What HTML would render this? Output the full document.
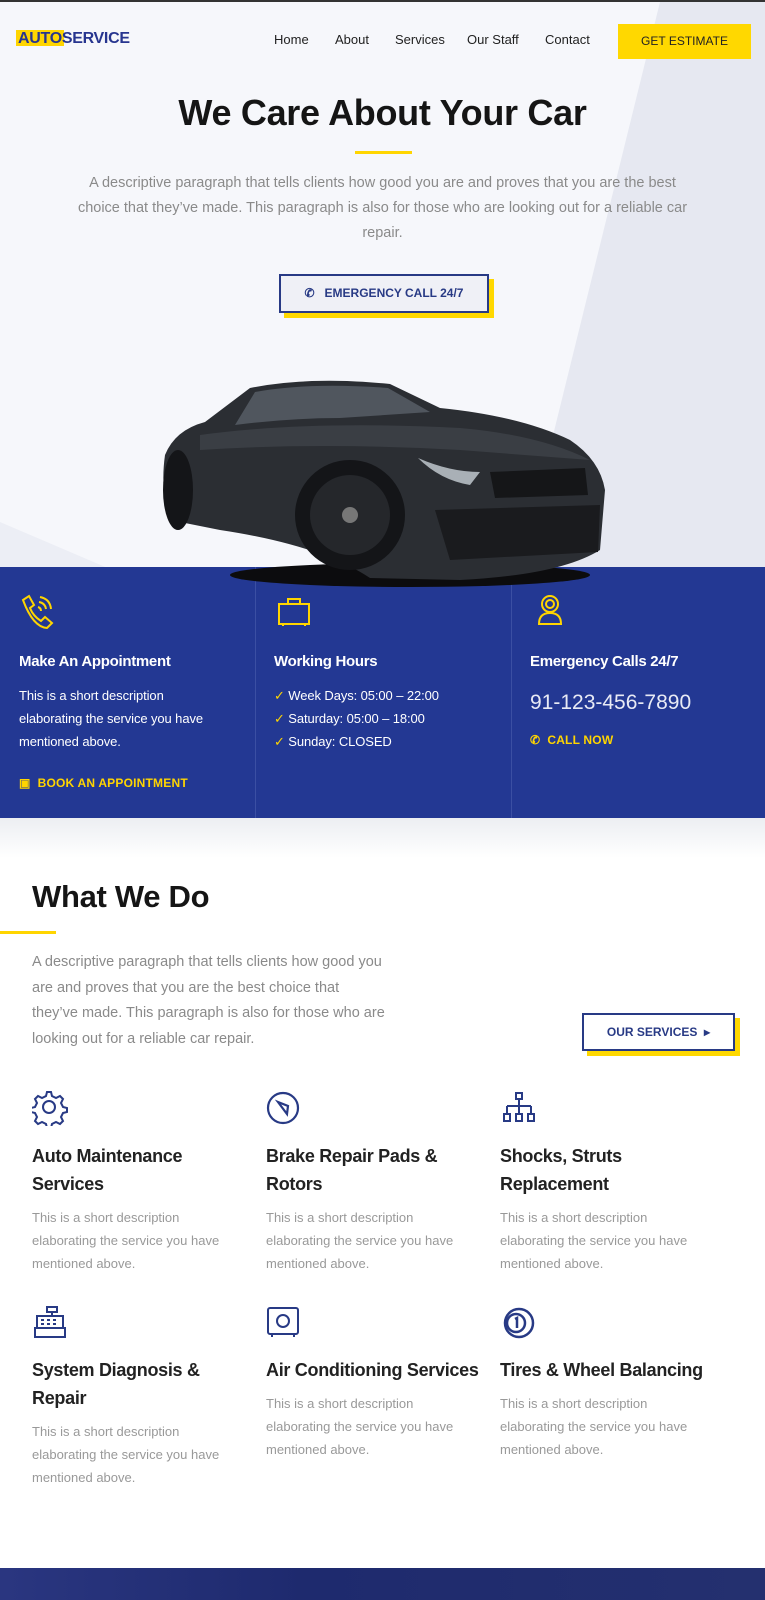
<!DOCTYPE html>
<html><head><meta charset="utf-8"><style>
*{margin:0;padding:0;box-sizing:border-box}
body{width:765px;height:1600px;overflow:hidden;background:#fff;font-family:"Liberation Sans",sans-serif;position:relative}
.a{position:absolute}
.hero{left:0;top:0;width:765px;height:567px;background:#e6e8f1;border-top:2px solid #333;overflow:hidden}
.nav{font-size:13px;color:#222;top:32px}
.p{color:#8a8a8a;font-size:13.5px;line-height:25px}
.blue{left:0;top:567px;width:765px;height:251px;background:#233893}
.col{top:0;height:251px;color:#fff}
.col h3{position:absolute;top:86px;font-size:15px;font-weight:bold;letter-spacing:-.3px}
.col .t{position:absolute;top:117px;font-size:13px;line-height:23px;letter-spacing:-.1px}
.ylink{color:#ffd500;font-size:12px;font-weight:bold;letter-spacing:.2px}
.sv h4{font-size:18px;font-weight:bold;color:#222;line-height:28px;letter-spacing:-.3px}
.sv .p{font-size:13px;line-height:23px;color:#999;margin-top:8px;letter-spacing:0}
</style></head><body>
<div class="a hero">
 <svg class="a" style="left:0;top:0" width="765" height="567"><polygon points="0,0 660,0 520,567 0,567" fill="#f6f7fb"/><polygon points="0,567 110,567 0,520" fill="#eceef5"/></svg>
</div>
<div class="a" style="left:16px;top:30px;width:48px;height:16px;background:#ffd500"></div>
<div class="a" style="left:18px;top:30px;font-size:16px;font-weight:900;color:#27358f;letter-spacing:-.3px">AUTOSERVICE</div>
<div class="a nav" style="left:274px">Home</div>
<div class="a nav" style="left:335px">About</div>
<div class="a nav" style="left:395px">Services</div>
<div class="a nav" style="left:467px">Our Staff</div>
<div class="a nav" style="left:545px">Contact</div>
<div class="a" style="left:618px;top:24px;width:133px;height:35px;background:#ffd800;font-size:12px;color:#222;text-align:center;line-height:35px">GET ESTIMATE</div>
<div class="a" style="left:0;top:92px;width:765px;text-align:center;font-size:36px;font-weight:bold;color:#151515;letter-spacing:-.3px">We Care About Your Car</div>
<div class="a" style="left:355px;top:151px;width:57px;height:3px;background:#ffd500"></div>
<div class="a p" style="left:20px;top:171px;width:725px;text-align:center;font-size:14.5px;letter-spacing:0">A descriptive paragraph that tells clients how good you are and proves that you are the best<br>choice that they’ve made. This paragraph is also for those who are looking out for a reliable car<br>repair.</div>
<div class="a" style="left:284px;top:279px;width:210px;height:39px;background:#ffd800"></div>
<div class="a" style="left:279px;top:274px;width:210px;height:39px;border:2px solid #283a85;background:#eff0f6;color:#283a85;font-size:12px;font-weight:bold;line-height:35px;text-align:center">&#9990;&nbsp;&nbsp; EMERGENCY CALL 24/7</div>
<div class="a blue">
 <div class="a" style="left:255px;top:0;width:1px;height:251px;background:#3b4fa3"></div>
 <div class="a" style="left:511px;top:0;width:1px;height:251px;background:#3b4fa3"></div>
 <div class="a col" style="left:19px;width:230px">
  <svg class="a" style="left:0;top:27px" width="38" height="36" viewBox="0 0 38 36" fill="none" stroke="#ffd500" stroke-width="2"><path d="M4,6 L10,2 L15,11 L11,14 Q14,22 22,27 L26,23 L33,29 L28,34 Q14,33 4,6Z"/><path d="M20,8 Q26,9 27,15 M21,3 Q31,5 32,15 M19,13 Q22,14 22,17"/></svg>
  <h3>Make An Appointment</h3>
  <div class="t">This is a short description<br>elaborating the service you have<br>mentioned above.</div>
  <div class="a ylink" style="top:209px">&#9635;&nbsp; BOOK AN APPOINTMENT</div>
 </div>
 <div class="a col" style="left:274px;width:230px">
  <svg class="a" style="left:4px;top:30px" width="32" height="30" fill="none" stroke="#ffd500" stroke-width="2"><rect x="1" y="7" width="30" height="20"/><rect x="10" y="2" width="12" height="5"/><path d="M5,27v2M27,27v2"/></svg>
  <h3>Working Hours</h3>
  <div class="t"><span style="color:#ffd500">✓</span> Week Days: 05:00 – 22:00<br><span style="color:#ffd500">✓</span> Saturday: 05:00 – 18:00<br><span style="color:#ffd500">✓</span> Sunday: CLOSED</div>
 </div>
 <div class="a col" style="left:530px;width:230px">
  <svg class="a" style="left:6px;top:27px" width="28" height="32" fill="none" stroke="#ffd500" stroke-width="2"><circle cx="14" cy="10" r="8"/><circle cx="14" cy="10" r="4"/><path d="M3,30 Q3,19 14,19 Q25,19 25,30 Z"/></svg>
  <h3>Emergency Calls 24/7</h3>
  <div class="a" style="top:124px;font-size:21px;color:#e8eaf5">91-123-456-7890</div>
  <div class="a ylink" style="top:166px">&#9990;&nbsp; CALL NOW</div>
 </div>
</div>
<!-- car -->
<svg class="a" style="left:160px;top:380px" width="450" height="210" viewBox="0 0 450 210">
<ellipse cx="250" cy="195" rx="180" ry="12" fill="#0c0c0e"/>
<path d="M5,75 Q15,50 45,42 L90,8 Q150,-4 230,4 L280,28 Q360,36 410,60 Q440,80 445,110 L440,170 Q400,195 300,200 L210,198 Q160,165 60,150 L10,140 Q0,110 5,75 Z" fill="#2b2e33"/>
<path d="M95,12 Q150,2 228,8 L270,32 L180,38 Q130,38 75,45 Z" fill="#50565e"/>
<path d="M40,55 Q150,40 300,48 Q380,55 430,80 L300,70 Q160,62 40,70Z" fill="#3a3e44"/>
<path d="M258,78 Q290,92 320,92 L310,105 Q280,100 258,78Z" fill="#a9b0b6"/>
<path d="M330,92 L425,88 L428,115 L335,118 Z" fill="#151618"/>
<circle cx="190" cy="135" r="55" fill="#141518"/><circle cx="190" cy="135" r="40" fill="#25272b"/><circle cx="190" cy="135" r="8" fill="#777"/>
<ellipse cx="18" cy="110" rx="15" ry="40" fill="#141518"/>
<path d="M275,130 L440,125 L438,172 L290,180 Z" fill="#1a1b1e"/>
</svg>
<div class="a" style="left:0;top:818px;width:765px;height:40px;background:linear-gradient(#eceef2,#fff)"></div>
<div class="a" style="left:32px;top:879px;font-size:31px;font-weight:bold;color:#151515;letter-spacing:-.3px">What We Do</div>
<div class="a" style="left:0;top:931px;width:56px;height:3px;background:#ffd500"></div>
<div class="a p" style="left:32px;top:950px;width:400px;font-size:14.5px;line-height:25.5px;letter-spacing:0">A descriptive paragraph that tells clients how good you<br>are and proves that you are the best choice that<br>they’ve made. This paragraph is also for those who are<br>looking out for a reliable car repair.</div>
<div class="a" style="left:587px;top:1018px;width:153px;height:38px;background:#ffd800"></div>
<div class="a" style="left:582px;top:1013px;width:153px;height:38px;border:2px solid #283a85;background:#fff;color:#283a85;font-size:12px;font-weight:bold;line-height:34px;text-align:center">OUR SERVICES &nbsp;▸</div>
<!-- services -->
<svg class="a" style="left:32px;top:1090px" width="36" height="36" fill="none" stroke="#283a85" stroke-width="2"><circle cx="17" cy="17" r="6"/><path d="M15,2h4l1,4 4,2 4-2 3,3-2,4 2,4 4,1v4l-4,1-2,4 2,4-3,3-4-2-4,2-1,4h-4l-1-4-4-2-4,2-3-3 2-4-2-4-4-1v-4l4-1 2-4-2-4 3-3 4,2 4-2z"/></svg>
<svg class="a" style="left:266px;top:1091px" width="34" height="34" fill="none" stroke="#283a85" stroke-width="2.2"><circle cx="17" cy="17" r="15"/><path d="M12,11 L22,15 L21,23 Z"/></svg>
<svg class="a" style="left:502px;top:1091px" width="34" height="34" fill="none" stroke="#283a85" stroke-width="2"><rect x="14" y="2" width="6" height="6"/><path d="M17,8v7M5,15h24M5,15v8M17,15v8M29,15v8"/><rect x="2" y="23" width="6" height="7"/><rect x="14" y="23" width="6" height="7"/><rect x="26" y="23" width="6" height="7"/></svg>
<div class="a sv" style="left:32px;top:1142px;width:225px"><h4>Auto Maintenance<br>Services</h4><div class="p">This is a short description<br>elaborating the service you have<br>mentioned above.</div></div>
<div class="a sv" style="left:266px;top:1142px;width:225px"><h4>Brake Repair Pads &amp;<br>Rotors</h4><div class="p">This is a short description<br>elaborating the service you have<br>mentioned above.</div></div>
<div class="a sv" style="left:500px;top:1142px;width:245px"><h4>Shocks, Struts<br>Replacement</h4><div class="p">This is a short description<br>elaborating the service you have<br>mentioned above.</div></div>
<svg class="a" style="left:33px;top:1305px" width="34" height="34" fill="none" stroke="#283a85" stroke-width="2"><rect x="14" y="2" width="10" height="5"/><path d="M19,7v4"/><rect x="4" y="11" width="26" height="12"/><rect x="2" y="23" width="30" height="9"/><path d="M8,15h3M14,15h3M20,15h3M8,19h3M14,19h3M20,19h3"/></svg>
<svg class="a" style="left:266px;top:1306px" width="34" height="34" fill="none" stroke="#283a85" stroke-width="2"><rect x="2" y="2" width="30" height="26" rx="2"/><circle cx="17" cy="15" r="6"/><path d="M6,28v3M28,28v3"/></svg>
<svg class="a" style="left:502px;top:1306px" width="34" height="34" fill="none" stroke="#283a85" stroke-width="2.5"><circle cx="17" cy="17" r="14"/><circle cx="14" cy="17" r="9"/><path d="M13,13l2-1v10"/></svg>
<div class="a sv" style="left:32px;top:1356px;width:225px"><h4>System Diagnosis &amp;<br>Repair</h4><div class="p">This is a short description<br>elaborating the service you have<br>mentioned above.</div></div>
<div class="a sv" style="left:266px;top:1356px;width:240px"><h4>Air Conditioning Services</h4><div class="p">This is a short description<br>elaborating the service you have<br>mentioned above.</div></div>
<div class="a sv" style="left:500px;top:1356px;width:250px"><h4>Tires &amp; Wheel Balancing</h4><div class="p">This is a short description<br>elaborating the service you have<br>mentioned above.</div></div>
<div class="a" style="left:0;top:1568px;width:765px;height:32px;background:linear-gradient(90deg,#2a3680,#1e2a6e 40%,#24306f)"></div>
</body></html>
